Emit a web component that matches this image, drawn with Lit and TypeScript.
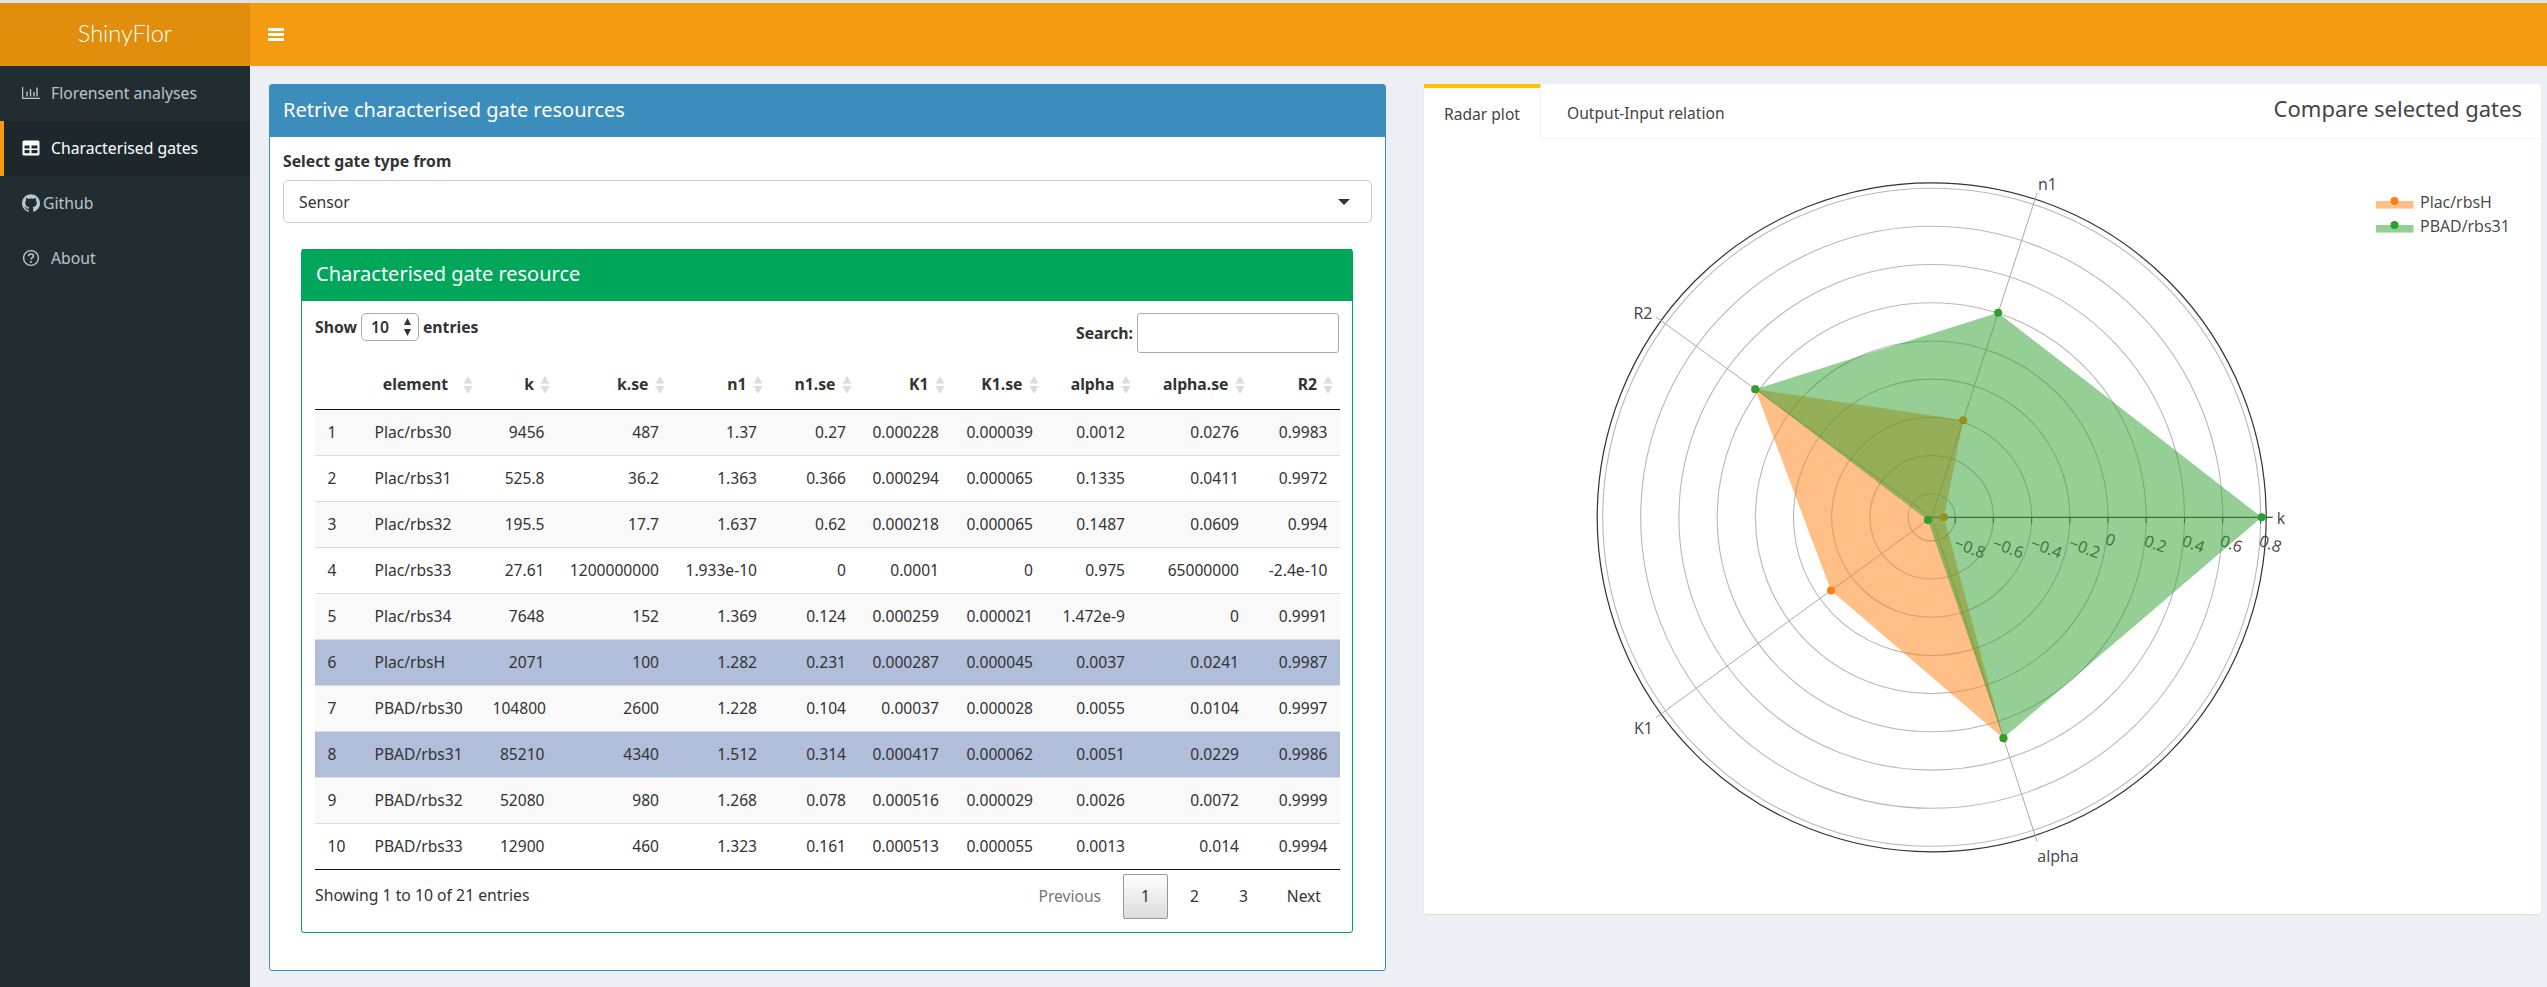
import { LitElement, html, svg, css } from "lit";
import { customElement } from "lit/decorators.js";

const ROWS = [
  ["1","Plac/rbs30","9456","487","1.37","0.27","0.000228","0.000039","0.0012","0.0276","0.9983"],
  ["2","Plac/rbs31","525.8","36.2","1.363","0.366","0.000294","0.000065","0.1335","0.0411","0.9972"],
  ["3","Plac/rbs32","195.5","17.7","1.637","0.62","0.000218","0.000065","0.1487","0.0609","0.994"],
  ["4","Plac/rbs33","27.61","1200000000","1.933e-10","0","0.0001","0","0.975","65000000","-2.4e-10"],
  ["5","Plac/rbs34","7648","152","1.369","0.124","0.000259","0.000021","1.472e-9","0","0.9991"],
  ["6","Plac/rbsH","2071","100","1.282","0.231","0.000287","0.000045","0.0037","0.0241","0.9987"],
  ["7","PBAD/rbs30","104800","2600","1.228","0.104","0.00037","0.000028","0.0055","0.0104","0.9997"],
  ["8","PBAD/rbs31","85210","4340","1.512","0.314","0.000417","0.000062","0.0051","0.0229","0.9986"],
  ["9","PBAD/rbs32","52080","980","1.268","0.078","0.000516","0.000029","0.0026","0.0072","0.9999"],
  ["10","PBAD/rbs33","12900","460","1.323","0.161","0.000513","0.000055","0.0013","0.014","0.9994"],
];
const HEAD = ["","element","k","k.se","n1","n1.se","K1","K1.se","alpha","alpha.se","R2"];
const SELECTED = new Set(["6","8"]);

const CX = 507.7, CY = 378.3;
const RADII = [23.6, 61.7, 100, 138.2, 176.3, 214.5, 252.8, 291, 329];
const ANGLES = [0, 72, 144, 216, 288];
const pt = (r: number, a: number) => {
  const t = (a * Math.PI) / 180;
  return [CX + r * Math.cos(t), CY - r * Math.sin(t)];
};
const ORANGE = [12.3, 102, 218, 124.5, 232.5];
const GREEN = [330, 215, 218, 4.7, 232];
const poly = (v: number[]) => v.map((r, i) => pt(r, ANGLES[i]).map((n) => n.toFixed(1)).join(",")).join(" ");
const TICKS = [
  ["\u22120.8", 546, 408.5], ["\u22120.6", 584.3, 408.5], ["\u22120.4", 622.5, 408.5], ["\u22120.2", 660.8, 408.5],
  ["0", 686.7, 400.5], ["0.2", 731.7, 404.5], ["0.4", 769.5, 404.5], ["0.6", 807.7, 404.5], ["0.8", 846.7, 404.5],
] as [string, number, number][];
const AXLABELS = [
  ["k", 857, 379], ["n1", 623.4, 45], ["R2", 219, 174], ["K1", 219.4, 589], ["alpha", 634, 717],
] as [string, number, number][];

@customElement("app-root")
export class AppRoot extends LitElement {
  static styles = css`
    :host { display: block; font-family: "Noto Sans", sans-serif; font-size: 15.75px; color: #333; background: #ecf0f5; min-height: 100vh; }
    * { box-sizing: border-box; }
    .strip { height: 3px; background: #e2e2e4; }
    .top { display: flex; height: 63px; background: #f39c12; }
    .logo { width: 250px; background: #e08e0b; color: #fff; display: flex; align-items: center; justify-content: center; font-size: 23.5px; font-weight: 300; font-family: Lato, "Noto Sans", sans-serif; padding-bottom: 4px; }
    .burger { margin-left: 18px; display: flex; flex-direction: column; justify-content: center; gap: 2px; width: 16px; }
    .burger i { display: block; height: 3px; background: #fff; }
    .main { display: flex; align-items: stretch; min-height: 921px; }
    .side { width: 250px; flex: none; background: #222d32; }
    .item { height: 55px; display: flex; align-items: center; padding: 0 0 1px 22px; color: #b8c7ce; gap: 11px; }
    .item.git { gap: 3px; }
    .item.on { background: #1e282c; color: #fff; border-left: 4px solid #f39c12; padding-left: 18px; }
    .item svg { flex: none; display: block; width: 18px; height: 18px; }
    .content { flex: 1; display: flex; align-items: flex-start; padding: 18px 6px 0 19px; gap: 38px; }

    .box { width: 1117px; height: 887px; border: 1px solid #3c8dbc; border-radius: 3px; background: #fff; flex: none; }
    .box-head { height: 52px; background: #3c8dbc; color: #fff; font-size: 20px; display: flex; align-items: center; padding: 0 0 3px 13px; }
    .box-body { padding: 13px 13px 0; }
    .lbl { font-weight: 700; line-height: 22px; height: 30px; }
    .sel { height: 43px; border: 1px solid #ccc; border-radius: 5px; display: flex; align-items: center; justify-content: space-between; padding: 0 21px 0 15px; }
    .caret { width: 0; height: 0; border-left: 6px solid transparent; border-right: 6px solid transparent; border-top: 6px solid #333; }

    .inner { margin: 26px 19px 0 18px; height: 684px; border: 1px solid #00a65a; border-radius: 3px; }
    .inner-head { height: 52px; margin: -1px 0 0; background: #00a65a; color: #fff; font-size: 20px; display: flex; align-items: center; padding: 0 0 3px 14px; }
    .inner-body { padding: 12px 13px 0; }
    .ctrl { display: flex; justify-content: space-between; align-items: flex-start; height: 49px; font-weight: 700; }
    .show { display: flex; align-items: center; height: 28px; gap: 4px; }
    .len { width: 58px; height: 28px; border: 1px solid #aaa; border-radius: 5px; display: flex; align-items: center; justify-content: space-between; padding: 0 6px 0 9px; font-weight: 600; }
    .search { display: flex; align-items: center; gap: 4px; }
    .sinput { width: 202px; height: 40px; border: 1px solid #aaa; border-radius: 3px; }
    table { width: 1025px; border-collapse: separate; border-spacing: 0; table-layout: fixed; }
    col:nth-child(1) { width: 47px; } col:nth-child(2) { width: 118px; } col:nth-child(3) { width: 77px; } col:nth-child(4) { width: 114.5px; }
    col:nth-child(5) { width: 98px; } col:nth-child(6) { width: 89px; } col:nth-child(7) { width: 93px; } col:nth-child(8) { width: 94px; }
    col:nth-child(9) { width: 92px; } col:nth-child(10) { width: 114px; } col:nth-child(11) { width: 88.5px; }
    th { height: 48px; padding: 0 23px 3px 12px; text-align: right; font-weight: 700; border-bottom: 1px solid #111; position: relative; white-space: nowrap; }
    th.c { text-align: center; }
    td { height: 46px; padding: 0 12.5px 1px; text-align: right; border-top: 1px solid #ddd; white-space: nowrap; font-size: 15.6px; }
    tr:first-child td { height: 45px; border-top: 0; }
    td.l { text-align: left; }
    tr.odd td { background: #f9f9f9; }
    tr.picked td { background: #b0bed9; }
    tbody tr:last-child td { border-bottom: 1px solid #111; height: 47px; }
    .sort { position: absolute; right: 7px; top: 14px; width: 10px; height: 18px; display: block; }
    .foot { display: flex; justify-content: space-between; align-items: flex-start; padding-top: 4px; }
    .info { padding-top: 10px; line-height: 22px; }
    .pages { display: flex; align-items: center; height: 45px; margin-right: 18px; font-size: 15.6px; }
    .pg { line-height: 45px; }
    .pg.off { color: #777; margin-right: 22px; }
    .pg.cur { width: 45px; height: 45px; margin-right: 2px; text-align: center; border: 1px solid #979797; border-radius: 2px; background: linear-gradient(#fff, #dcdcdc); line-height: 43px; }
    .pg.n { width: 49px; text-align: center; }
    .pg.nx { width: 53px; text-align: right; }

    .panel { width: 1117px; height: 830px; background: #fff; border-radius: 3px; flex: none; color: #444; box-shadow: 0 1px 1px rgba(0,0,0,.08); }
    .tabs { display: flex; height: 55px; border-bottom: 1px solid #f4f4f4; align-items: stretch; }
    .tab { padding: 4px 20px 0; display: flex; align-items: center; font-size: 15.6px; }
    .tab.act { width: 117px; border-top: 4px solid #fdc305; border-right: 1px solid #f4f4f4; margin-bottom: -1px; background: #fff; padding: 0 0 0 20px; }
    .tab.two { padding-left: 26px; }
    .ttl { margin-left: auto; font-size: 22px; padding-right: 19px; align-self: center; margin-top: -6px; }
    .plot { display: block; width: 1117px; height: 775px; font-family: "Open Sans", "Noto Sans", sans-serif; }
    .plot text { fill: #444; font-size: 16px; }
  `;

  private sortIcon() {
    return html`<svg class="sort" viewBox="0 0 10 18"><path d="M5 0L9.5 7.5H.5zM5 18L.5 10H9.500z" fill="#dcdcdc"/></svg>`;
  }

  private plot() {
    return html`<svg class="plot" viewBox="0 0 1117 775">
      ${RADII.map((r) => svg`<circle cx=${CX} cy=${CY} r=${r} fill="none" stroke="#b8b8b8" stroke-width="1.1"/>`)}
      <circle cx=${CX} cy=${CY} r="334.5" fill="none" stroke="#333" stroke-width="1.2"/>
      ${ANGLES.slice(1).map((a) => {
        const [x, y] = pt(341, a);
        return svg`<line x1=${CX} y1=${CY} x2=${x} y2=${y} stroke="#aaa" stroke-width="1"/>`;
      })}
      <line x1=${CX} y1=${CY} x2=${CX + 341} y2=${CY} stroke="#444" stroke-width="1.2"/>
      ${RADII.map((r) => svg`<line x1=${CX + r} y1=${CY} x2=${CX + r} y2=${CY + 6} stroke="#444" stroke-width="1"/>`)}
      ${TICKS.map(([t, x, y]) => svg`<text x=${x} y=${y} text-anchor="middle" dominant-baseline="central" transform="rotate(20 ${x} ${y})">${t}</text>`)}
      ${AXLABELS.map(([t, x, y]) => svg`<text x=${x} y=${y} text-anchor="middle" dominant-baseline="central">${t}</text>`)}
      <polygon points=${poly(ORANGE)} fill="#ff7f0e" fill-opacity="0.5"/>
      ${ORANGE.map((r, i) => { const [x, y] = pt(r, ANGLES[i]); return svg`<circle cx=${x} cy=${y} r="4" fill="#ff7f0e"/>`; })}
      <polygon points=${poly(GREEN)} fill="#2ca02c" fill-opacity="0.5"/>
      ${GREEN.map((r, i) => { const [x, y] = pt(r, ANGLES[i]); return svg`<circle cx=${x} cy=${y} r="4" fill="#2ca02c"/>`; })}
      <rect x="952" y="62" width="37.5" height="7.6" fill="#ff7f0e" fill-opacity="0.5"/>
      <circle cx="970.5" cy="62" r="4" fill="#ff7f0e"/>
      <text x="996" y="62.5" dominant-baseline="central">Plac/rbsH</text>
      <rect x="952" y="86" width="37.5" height="7.6" fill="#2ca02c" fill-opacity="0.5"/>
      <circle cx="970.5" cy="86" r="4" fill="#2ca02c"/>
      <text x="996" y="86.5" dominant-baseline="central">PBAD/rbs31</text>
    </svg>`;
  }

  render() {
    return html`
      <div class="strip"></div>
      <div class="top">
        <div class="logo">ShinyFlor</div>
        <div class="burger"><i></i><i></i><i></i></div>
      </div>
      <div class="main">
        <nav class="side">
          <div class="item">
            <svg viewBox="0 0 18 18"><path d="M.6 3v11.4H18" fill="none" stroke="currentColor" stroke-width="1.2"/><path d="M5 7.5v5M8.5 5v7.5M12 8v4.5M15 3.5v9" fill="none" stroke="currentColor" stroke-width="1.4"/></svg>
            Florensent analyses
          </div>
          <div class="item on">
            <svg viewBox="0 0 18 18"><path fill-rule="evenodd" fill="currentColor" d="M2 1.5h14a1.5 1.5 0 011.5 1.5v12a1.5 1.5 0 01-1.5 1.5H2A1.5 1.5 0 01.5 15V3A1.500 1.500 0 012 1.500zM2.500 6.500v3h5v-3zM9.500 6.500v3h6v-3zM2.500 11v3.300h5V11zM9.500 11v3.300h6V11z"/></svg>
            Characterised gates
          </div>
          <div class="item git">
            <svg viewBox="0 0 24 24"><path fill="currentColor" d="M12 .297c-6.630 0-12 5.373-12 12 0 5.303 3.438 9.800 8.205 11.385.6.113.82-.258.82-.577 0-.285-.01-1.040-.015-2.040-3.338.724-4.042-1.610-4.042-1.610C4.422 18.070 3.633 17.700 3.633 17.700c-1.087-.744.084-.729.084-.729 1.205.084 1.838 1.236 1.838 1.236 1.070 1.835 2.809 1.305 3.495.998.108-.776.417-1.305.76-1.605-2.665-.3-5.466-1.332-5.466-5.930 0-1.310.465-2.380 1.235-3.220-.135-.303-.54-1.523.105-3.176 0 0 1.005-.322 3.300 1.230.96-.267 1.980-.399 3-.405 1.020.006 2.040.138 3 .405 2.280-1.552 3.285-1.230 3.285-1.230.645 1.653.24 2.873.12 3.176.765.84 1.230 1.910 1.230 3.220 0 4.610-2.805 5.625-5.475 5.920.42.36.81 1.096.81 2.220 0 1.606-.015 2.896-.015 3.286 0 .315.21.69.825.57C20.565 22.092 24 17.592 24 12.297c0-6.627-5.373-12-12-12"/></svg>
            Github
          </div>
          <div class="item">
            <svg viewBox="0 0 18 18"><circle cx="9" cy="9" r="7.400" fill="none" stroke="currentColor" stroke-width="1.400"/><path d="M6.500 7.200c0-1.500 1.200-2.300 2.500-2.300s2.500.9 2.500 2.200c0 1.800-2.500 1.800-2.500 3.500" fill="none" stroke="currentColor" stroke-width="1.500"/><circle cx="9" cy="13" r="1" fill="currentColor"/></svg>
            About
          </div>
        </nav>
        <main class="content">
          <section class="box">
            <div class="box-head">Retrive characterised gate resources</div>
            <div class="box-body">
              <div class="lbl">Select gate type from</div>
              <div class="sel"><span>Sensor</span><span class="caret"></span></div>
              <div class="inner">
                <div class="inner-head">Characterised gate resource</div>
                <div class="inner-body">
                  <div class="ctrl">
                    <div class="show">
                      <span>Show</span>
                      <span class="len"><span>10</span><svg width="9" height="18" viewBox="0 0 9 18"><path d="M4.500 0L8 7H1zM4.500 18L1 11h7z" fill="#333"/></svg></span>
                      <span>entries</span>
                    </div>
                    <div class="search"><span>Search:</span><span class="sinput"></span></div>
                  </div>
                  <table>
                    <colgroup>${HEAD.map(() => html`<col>`)}</colgroup>
                    <thead><tr>${HEAD.map((h, i) => html`<th class=${i === 1 ? "c" : ""}>${h}${i ? this.sortIcon() : ""}</th>`)}</tr></thead>
                    <tbody>
                      ${ROWS.map((r, ri) => html`<tr class="${ri % 2 === 0 ? "odd" : ""} ${SELECTED.has(r[0]) ? "picked" : ""}">
                        ${r.map((c, i) => html`<td class=${i < 2 ? "l" : ""}>${c}</td>`)}
                      </tr>`)}
                    </tbody>
                  </table>
                  <div class="foot">
                    <div class="info">Showing 1 to 10 of 21 entries</div>
                    <div class="pages">
                      <span class="pg off">Previous</span>
                      <span class="pg cur">1</span>
                      <span class="pg n">2</span>
                      <span class="pg n">3</span>
                      <span class="pg nx">Next</span>
                    </div>
                  </div>
                </div>
              </div>
            </div>
          </section>
          <section class="panel">
            <div class="tabs">
              <div class="tab act">Radar plot</div>
              <div class="tab two">Output-Input relation</div>
              <div class="ttl">Compare selected gates</div>
            </div>
            ${this.plot()}
          </section>
        </main>
      </div>
    `;
  }
}
